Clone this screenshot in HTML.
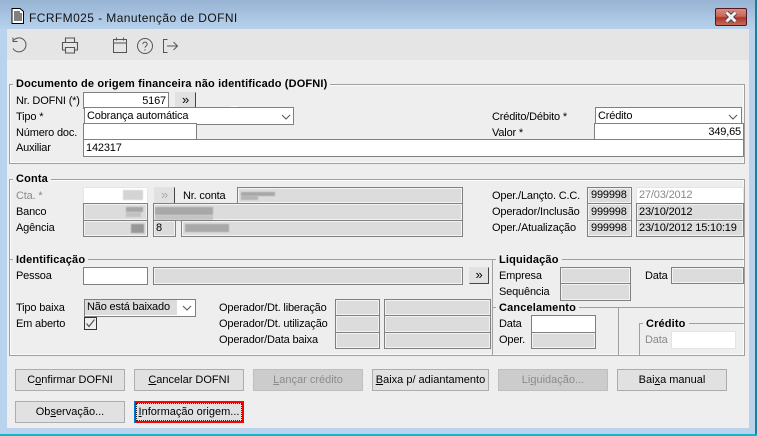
<!DOCTYPE html>
<html><head><meta charset="utf-8"><style>
html,body{margin:0;padding:0}
body{width:757px;height:436px;overflow:hidden;position:relative;background:#b9d3ee;font:11px/13px "Liberation Sans",sans-serif;color:#000;letter-spacing:-.17px}
div,span.a,svg.a{position:absolute;box-sizing:border-box}
.t{white-space:nowrap;line-height:13px;margin-top:1px}
.b{font-weight:bold;background:#eee;padding:0 3px;color:#000;letter-spacing:.15px;margin-top:0}
.f{border:1px solid #808080;background:#fff;white-space:nowrap;line-height:16px;padding:0 2px;overflow:hidden}
.g{background:#dcdcdc;box-shadow:inset 0 0 0 1px #f2f2f2}
.r{text-align:right}
.btn{background:#e1e1e1;border:1px solid #adadad;text-align:center;line-height:21px;height:22px;width:110px;top:369px;letter-spacing:0}
.dis{background:#ccc;border-color:#bfbfbf;color:#8c8c8c}
.l{background:#a0a0a0}
.p{background:#e1e1e1;border:1px solid #e1e1e1;border-right:1px solid #444;border-bottom:1px solid #444;text-align:center;line-height:13px;font-size:13px}
.m{filter:blur(.5px)}
u{text-decoration:underline}
</style></head><body>
<div style="left:0;top:0;width:757px;height:30px;background:linear-gradient(#97b3d3,#b9d3ee)"></div>
<div style="left:755px;top:0;width:2px;height:436px;background:#1d7f93"></div>
<div style="left:0;top:434px;width:757px;height:2px;background:#12b5cc"></div>
<div style="left:7px;top:29px;width:742px;height:399px;background:#eee"></div>
<div style="left:7px;top:29px;width:742px;height:31px;background:#e5e5e5"></div>

<svg class="a" style="left:11px;top:8px" width="14" height="16" viewBox="0 0 14 16"><path d="M1 .5h8l3.500 3V15.500H1z" fill="#fff" stroke="#000"/><path d="M3 4h6M3 6h8M3 8h8M3 10h8M3 12h8" stroke="#000"/></svg>
<div class="t" style="left:29px;top:11px;font-size:12px;letter-spacing:.42px;color:#111">FCRFM025 - Manutenção de DOFNI</div>

<div style="left:715px;top:8px;width:32px;height:18px;border:1px solid #4f1a22;border-radius:2px;background:linear-gradient(#d98c80 0,#c9685c 45%,#a9362a 55%,#c96a58 100%)"></div>
<svg class="a" style="left:724px;top:11px" width="14" height="12" viewBox="0 0 14 12"><path d="M2.500 1.500L11.500 10.500M11.500 1.500L2.500 10.500" stroke="#4a3a46" stroke-width="4.600"/><path d="M2.500 1.500L11.500 10.500M11.500 1.500L2.500 10.500" stroke="#eef0f4" stroke-width="3"/></svg>

<svg class="a" style="left:9px;top:36px" width="22" height="20" viewBox="0 0 22 20" fill="none" stroke="#555" stroke-width="1"><path d="M4.500 4.500A7 7 0 1 1 4 12.500"/><path d="M4 1.500V5.500H8.500"/></svg>
<svg class="a" style="left:60px;top:36px" width="20" height="20" viewBox="0 0 20 20" fill="none" stroke="#555" stroke-width="1.100"><path d="M5.500 6.500V2h9v4.500M5 14H2.500V6.500h15V14H15M5.500 11.500h9V17h-9z"/></svg>
<svg class="a" style="left:111px;top:36px" width="18" height="19" viewBox="0 0 18 19" fill="none" stroke="#555" stroke-width="1"><path d="M2.500 3.500h13v13h-13zM2.500 7h13M5.500 1.500v3M12.500 1.500v3"/></svg>
<svg class="a" style="left:136px;top:37px" width="18" height="18" viewBox="0 0 18 18" fill="none" stroke="#555" stroke-width="1"><circle cx="9" cy="9" r="7.500"/><path d="M6.800 7.200C6.800 4.500 11.200 4.500 11.200 7.200 11.200 9 9 8.800 9 10.800M9 12.300v1.300"/></svg>
<svg class="a" style="left:162px;top:37px" width="18" height="18" viewBox="0 0 18 18" fill="none" stroke="#555" stroke-width="1"><path d="M5.500 2.500H1.500V15.500H5.500M5 9H15.500M11.500 5L15.500 9 11.500 13"/></svg>

<!-- group 1 -->
<div style="left:9px;top:84px;width:736px;height:80px;border:1px solid #a0a0a0;box-shadow:inset 0 0 0 1px #fafafa"></div>
<div class="t b" style="left:13px;top:78px">Documento de origem financeira não identificado (DOFNI)</div>
<div class="t" style="left:16px;top:94px">Nr. DOFNI (*)</div>
<div class="f r" style="left:83px;top:92px;width:86px;height:17px">5167</div>
<div class="p" style="left:175px;top:92px;width:21px;height:16px">»</div>
<div style="left:231px;top:106px;width:7px;height:1px;background:#fff"></div>
<div class="t" style="left:16px;top:110px">Tipo *</div>
<div class="f" style="left:84px;top:107px;width:210px;height:18px">Cobrança automática</div>
<svg class="a" style="left:281px;top:114px" width="10" height="7" viewBox="0 0 10 7"><path d="M1 1L5 5 9 1" fill="none" stroke="#555"/></svg>
<div class="t" style="left:16px;top:126px">Número doc.</div>
<div class="f" style="left:83px;top:123px;width:114px;height:17px"></div>
<div class="t" style="left:16px;top:141px">Auxiliar</div>
<div class="f" style="left:83px;top:139px;width:661px;height:18px;line-height:17px">142317</div>
<div class="t" style="left:492px;top:110px">Crédito/Débito *</div>
<div class="f" style="left:595px;top:107px;width:147px;height:18px">Crédito</div>
<svg class="a" style="left:728px;top:114px" width="10" height="7" viewBox="0 0 10 7"><path d="M1 1L5 5 9 1" fill="none" stroke="#555"/></svg>
<div class="t" style="left:492px;top:126px">Valor *</div>
<div class="f r" style="left:594px;top:123px;width:150px;height:17px">349,65</div>

<!-- group 2 -->
<div style="left:9px;top:179px;width:736px;height:177px;border:1px solid #a0a0a0;box-shadow:inset 0 0 0 1px #fafafa"></div>
<div class="l" style="left:10px;top:259px;width:734px;height:1px"></div>
<div class="l" style="left:492px;top:259px;width:1px;height:96px"></div>
<div class="l" style="left:492px;top:307px;width:252px;height:1px"></div>
<div class="l" style="left:618px;top:307px;width:1px;height:48px"></div>
<div class="l" style="left:639px;top:323px;width:105px;height:1px"></div>
<div class="l" style="left:639px;top:323px;width:1px;height:32px"></div>
<div class="t b" style="left:13px;top:173px">Conta</div>
<div class="t b" style="left:13px;top:254px">Identificação</div>
<div class="t b" style="left:496px;top:254px">Liquidação</div>
<div class="t b" style="left:496px;top:302px">Cancelamento</div>
<div class="t b" style="left:643px;top:318px">Crédito</div>

<div class="t" style="left:16px;top:189px;color:#8a8a8a">Cta. *</div>
<div class="f" style="left:83px;top:187px;width:65px;height:17px;border-color:#e6e6e6"></div>
<div class="m" style="left:123px;top:190px;width:20px;height:10px;background:#d4d4d4"></div>
<div class="p" style="left:154px;top:187px;width:21px;height:17px;color:#aaa;border-bottom-color:#e1e1e1;line-height:14px">»</div>
<div class="t" style="left:183px;top:189px">Nr. conta</div>
<div class="f g" style="left:237px;top:187px;width:226px;height:17px;line-height:15px"></div>
<div class="m" style="left:241px;top:192px;width:34px;height:4px;background:#a8a8a8"></div>
<div class="m" style="left:241px;top:196px;width:17px;height:4px;background:#b4b4b4"></div>

<div class="t" style="left:16px;top:205px">Banco</div>
<div class="f g" style="left:83px;top:203px;width:65px;height:18px"></div>
<div class="m" style="left:126px;top:207px;width:17px;height:5px;background:#a6a6a6"></div>
<div class="m" style="left:126px;top:212px;width:15px;height:5px;background:#c2c2c2"></div>
<div class="f g" style="left:153px;top:203px;width:310px;height:18px"></div>
<div class="m" style="left:155px;top:207px;width:58px;height:8px;background:#a8a8a8"></div>
<div class="m" style="left:155px;top:215px;width:58px;height:5px;background:#c4c4c4"></div>

<div class="t" style="left:16px;top:221px">Agência</div>
<div class="f g" style="left:83px;top:220px;width:65px;height:17px"></div>
<div class="m" style="left:131px;top:224px;width:13px;height:9px;background:#989898"></div>
<div class="f g" style="left:153px;top:220px;width:23px;height:17px;line-height:15px">8</div>
<div class="f g" style="left:181px;top:220px;width:282px;height:17px"></div>
<div class="m" style="left:185px;top:224px;width:44px;height:8px;background:#a8a8a8"></div>

<div class="t" style="left:492px;top:189px">Oper./Lançto. C.C.</div>
<div class="t" style="left:492px;top:205px">Operador/Inclusão</div>
<div class="t" style="left:492px;top:221px">Oper./Atualização</div>
<div class="f g" style="left:587px;top:187px;width:45px;height:17px;line-height:15px;padding:0 3px">999998</div>
<div class="f g" style="left:587px;top:203px;width:45px;height:18px;padding:0 3px">999998</div>
<div class="f g" style="left:587px;top:220px;width:45px;height:17px;line-height:15px;padding:0 3px">999998</div>
<div class="f" style="left:636px;top:187px;width:108px;height:17px;color:#8a8a8a;border-color:#e4e4e4;line-height:15px">27/03/2012</div>
<div class="f g" style="left:636px;top:203px;width:108px;height:18px">23/10/2012</div>
<div class="f g" style="left:636px;top:220px;width:108px;height:17px;line-height:15px">23/10/2012 15:10:19</div>

<div class="t" style="left:16px;top:269px">Pessoa</div>
<div class="f" style="left:83px;top:267px;width:65px;height:18px"></div>
<div class="f g" style="left:153px;top:267px;width:310px;height:18px"></div>
<div class="p" style="left:469px;top:267px;width:20px;height:17px">»</div>

<div class="t" style="left:499px;top:269px">Empresa</div>
<div class="f g" style="left:560px;top:267px;width:71px;height:17px"></div>
<div class="t" style="left:645px;top:269px">Data</div>
<div class="f g" style="left:671px;top:267px;width:73px;height:17px"></div>
<div class="t" style="left:499px;top:285px">Sequência</div>
<div class="f g" style="left:560px;top:283px;width:71px;height:18px"></div>

<div class="t" style="left:16px;top:301px">Tipo baixa</div>
<div class="f" style="left:84px;top:299px;width:112px;height:18px"></div>
<div style="left:85px;top:300px;width:92px;height:15px;background:#dcdcdc;padding-left:2px;line-height:14px;white-space:nowrap">Não está baixado</div>
<svg class="a" style="left:182px;top:305px" width="10" height="7" viewBox="0 0 10 7"><path d="M1 1L5 5 9 1" fill="none" stroke="#555"/></svg>
<div class="t" style="left:16px;top:317px">Em aberto</div>
<div style="left:84px;top:317px;width:13px;height:13px;border:1px solid #333;background:#eee"></div>
<svg class="a" style="left:85px;top:318px" width="11" height="11" viewBox="0 0 11 11"><path d="M1.500 5.500L4 8.500 9.500 1.500" fill="none" stroke="#555" stroke-width="1.200"/></svg>

<div class="t" style="left:219px;top:301px">Operador/Dt. liberação</div>
<div class="t" style="left:219px;top:317px">Operador/Dt. utilização</div>
<div class="t" style="left:219px;top:333px">Operador/Data baixa</div>
<div class="f g" style="left:335px;top:299px;width:45px;height:17px"></div>
<div class="f g" style="left:335px;top:315px;width:45px;height:18px"></div>
<div class="f g" style="left:335px;top:332px;width:45px;height:17px"></div>
<div class="f g" style="left:384px;top:299px;width:107px;height:17px"></div>
<div class="f g" style="left:384px;top:315px;width:107px;height:18px"></div>
<div class="f g" style="left:384px;top:332px;width:107px;height:17px"></div>

<div class="t" style="left:499px;top:317px">Data</div>
<div class="f" style="left:531px;top:315px;width:65px;height:18px"></div>
<div class="t" style="left:499px;top:333px">Oper.</div>
<div class="f g" style="left:531px;top:332px;width:65px;height:17px"></div>
<div class="t" style="left:645px;top:333px;color:#8a8a8a">Data</div>
<div class="f" style="left:671px;top:331px;width:65px;height:18px;border-color:#e4e4e4"></div>

<!-- buttons -->
<div class="btn" style="left:15px">C<u>o</u>nfirmar DOFNI</div>
<div class="btn" style="left:134px"><u>C</u>ancelar DOFNI</div>
<div class="btn dis" style="left:253px"><u>L</u>ançar crédito</div>
<div class="btn" style="left:372px;width:117px"><u>B</u>aixa p/ adiantamento</div>
<div class="btn dis" style="left:498px">Li<u>q</u>uidação...</div>
<div class="btn" style="left:617px">Bai<u>x</u>a manual</div>
<div class="btn" style="left:15px;top:401px">Ob<u>s</u>ervação...</div>
<div class="btn" style="left:134px;top:401px;border:2px solid #f00;line-height:19px;outline:1px dotted #222;outline-offset:-3px"><u>I</u>nformação origem...</div>
<div style="left:134px;top:401px;width:1px;height:22px;background:#0078d7"></div>
</body></html>
